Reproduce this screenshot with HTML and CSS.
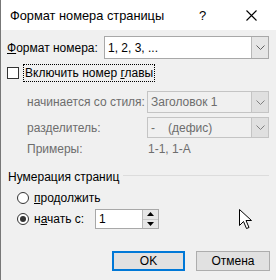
FILE: index.html
```html
<!DOCTYPE html>
<html>
<head>
  <title>Формат номера страницы</title>
  <link rel="stylesheet" href="styles.css">
</head>
<body>
  <div class="window">
    <div class="titlebar">
      <span class="title">Формат номера страницы</span>
      <span class="help">?</span>
      <span class="close">
        <svg width="11" height="11" viewBox="0 0 11 11"><path d="M0.5 0.5 L10.5 10.5 M10.5 0.5 L0.5 10.5" stroke="#000" stroke-width="1.1"/></svg>
      </span>
    </div>

    <div class="content">
      <div class="row format-row">
        <label class="label"><u>Ф</u>ормат номера:</label>
        <div class="select">
          <span class="value">1, 2, 3, ...</span>
          <span class="drop"><svg width="9" height="5" viewBox="0 0 9 5"><path d="M0.5 0.5 L4.5 4.5 L8.5 0.5" fill="none" stroke="#606060"/></svg></span>
        </div>
      </div>

      <div class="row check-row">
        <span class="checkbox"></span>
        <span class="focus">Включить номер <u>г</u>лавы</span>
      </div>

      <div class="row sub-row first">
        <span class="label sub">начинается со стиля:</span>
        <div class="select disabled">
          <span class="value">Заголовок 1</span>
          <span class="drop"><svg width="9" height="5" viewBox="0 0 9 5"><path d="M0.5 0.5 L4.5 4.5 L8.5 0.5" fill="none" stroke="#808080"/></svg></span>
        </div>
      </div>

      <div class="row sub-row second">
        <span class="label sub">разделитель:</span>
        <div class="select disabled">
          <span class="value"><span class="dash">-</span>(дефис)</span>
          <span class="drop"><svg width="9" height="5" viewBox="0 0 9 5"><path d="M0.5 0.5 L4.5 4.5 L8.5 0.5" fill="none" stroke="#808080"/></svg></span>
        </div>
      </div>

      <div class="row sub-row examples">
        <span class="label sub">Примеры:</span>
        <span class="sub">1-1, 1-A</span>
      </div>

      <div class="row group-head">
        <span>Нумерация страниц</span>
        <span class="line"></span>
      </div>

      <div class="row radio-row first">
        <span class="radio"></span>
        <span><u>п</u>родолжить</span>
      </div>

      <div class="row radio-row second">
        <span class="radio checked"><span class="dot"></span></span>
        <span class="radio-label">н<u>а</u>чать с:</span>
        <div class="spin">
          <span class="value">1</span>
          <span class="spin-btns">
            <span class="spin-btn"><svg width="7" height="4" viewBox="0 0 7 4"><path d="M0 4 L3.5 0 L7 4 Z" fill="#000"/></svg></span>
            <span class="spin-btn"><svg width="7" height="4" viewBox="0 0 7 4"><path d="M0 0 L3.5 4 L7 0 Z" fill="#000"/></svg></span>
          </span>
        </div>
      </div>

      <div class="row buttons">
        <button class="btn default">OK</button>
        <button class="btn">Отмена</button>
      </div>
    </div>

    <svg class="cursor" width="13" height="22" viewBox="0 0 13 22">
      <path d="M0.5 0.5 L0.5 16.5 L4.5 12.5 L7.5 19.5 L10 18.5 L7 11.5 L12.5 11.5 Z" fill="#fff" stroke="#000" stroke-width="1"/>
    </svg>
  </div>
</body>
</html>
```

FILE: styles.css
```css
body {
  margin: 0;
  padding: 0;
  font-family: "Liberation Sans", Arial, sans-serif;
  font-size: 12px;
  color: #000;
  background: #f0f0f0;
}

.window {
  position: relative;
  width: 276px;
  height: 280px;
  border-left: 1px solid #777;
  box-sizing: border-box;
  background: #f0f0f0;
  overflow: hidden;
}

.titlebar {
  height: 30px;
  background: #fff;
  display: flex;
  align-items: center;
  padding-left: 9px;
}

.title {
  font-size: 12.8px;
  flex: 1;
}

.help {
  width: 12px;
  font-size: 13px;
  margin-right: 35px;
}

.close {
  display: flex;
  margin-right: 19px;
}

.row {
  display: flex;
  align-items: center;
}

.format-row {
  margin-top: 6px;
  height: 23px;
  padding-left: 6px;
}

.label {
  width: 97px;
}

.select {
  box-sizing: border-box;
  width: 165px;
  height: 23px;
  background: #fff;
  border: 1px solid #a8a8a8;
  display: flex;
  align-items: center;
}

.select .value {
  flex: 1;
  padding-left: 3px;
}

.drop {
  width: 16px;
  height: 100%;
  background: #e6e6e6;
  border-left: 1px solid #b8b8b8;
  display: flex;
  align-items: center;
  justify-content: center;
}

.check-row {
  margin-top: 6px;
  height: 16px;
  padding-left: 6px;
}

.checkbox {
  box-sizing: border-box;
  width: 12px;
  height: 12px;
  background: #fff;
  border: 1px solid #333;
  margin-right: 5px;
}

.focus {
  outline: 1px dotted #000;
  padding: 1px 1px;
}

.sub-row {
  padding-left: 26px;
}

.sub-row .label {
  width: 120px;
}

.sub {
  color: #6d6d6d;
}

.sub-row .select {
  width: 122px;
  background: #f0f0f0;
  border-color: #c4c4c4;
  color: #6d6d6d;
}

.sub-row .drop {
  background: #e0e0e0;
  border-left-color: #c4c4c4;
}

.sub-row.first {
  margin-top: 10px;
  height: 22px;
}

.sub-row.first .select {
  height: 22px;
}

.sub-row.second {
  margin-top: 4px;
  height: 21px;
}

.sub-row.second .select {
  height: 21px;
}

.dash {
  display: inline-block;
  width: 17px;
}

.examples {
  margin-top: 3px;
  height: 16px;
}

.examples .label {
  width: 121px;
}

.group-head {
  margin-top: 12px;
  height: 16px;
  padding-left: 7px;
  padding-right: 7px;
}

.line {
  flex: 1;
  height: 1px;
  background: #dcdcdc;
  margin-left: 4px;
  margin-top: -3px;
}

.radio-row {
  padding-left: 16px;
}

.radio-row.first {
  margin-top: 5px;
  height: 16px;
}

.radio-row.second {
  margin-top: 3px;
  height: 20px;
}

.radio {
  box-sizing: border-box;
  width: 12px;
  height: 12px;
  border: 1px solid #333;
  border-radius: 50%;
  background: #fff;
  margin-right: 5px;
  display: flex;
  align-items: center;
  justify-content: center;
}

.dot {
  width: 6px;
  height: 6px;
  border-radius: 50%;
  background: #333;
}

.radio-label {
  width: 61px;
}

.spin {
  box-sizing: border-box;
  width: 64px;
  height: 20px;
  background: #fff;
  border: 1px solid #a8a8a8;
  display: flex;
  align-items: center;
}

.spin .value {
  flex: 1;
  padding-left: 3px;
}

.spin-btns {
  width: 15px;
  height: 100%;
  display: flex;
  flex-direction: column;
  border-left: 1px solid #b8b8b8;
}

.spin-btn {
  flex: 1;
  background: #e6e6e6;
  display: flex;
  align-items: center;
  justify-content: center;
}

.spin-btn + .spin-btn {
  border-top: 1px solid #c8c8c8;
}

.buttons {
  margin-top: 22px;
  justify-content: flex-end;
  padding-right: 6px;
  gap: 11px;
}

.btn {
  box-sizing: border-box;
  width: 74px;
  height: 20px;
  background: #e1e1e1;
  border: 1px solid #adadad;
  font-family: "Liberation Sans", Arial, sans-serif;
  font-size: 12px;
  color: #000;
  padding: 0;
}

.btn.default {
  width: 73px;
  border: 2px solid #0078d7;
}

.cursor {
  position: absolute;
  left: 238px;
  top: 209px;
}
```
